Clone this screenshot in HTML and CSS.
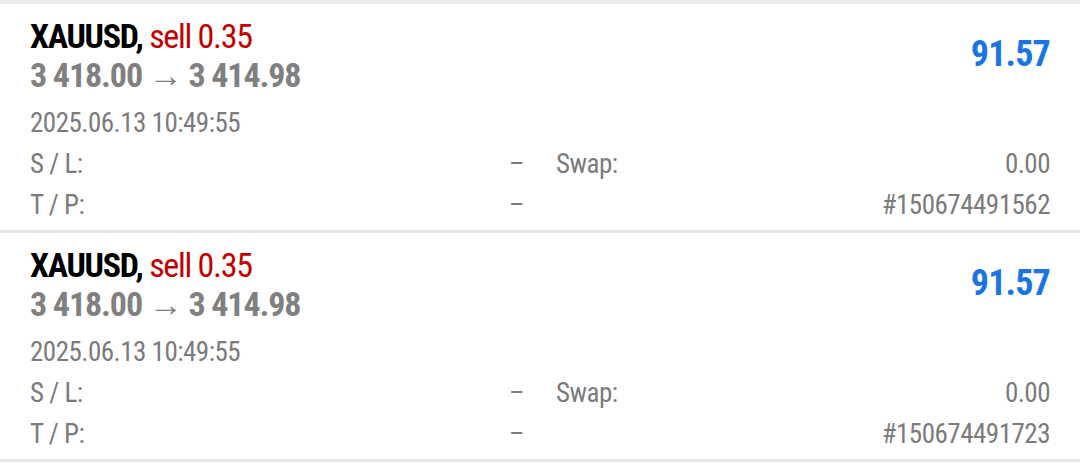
FILE: index.html
```html
<!DOCTYPE html>
<html lang="en">
<head>
<meta charset="UTF-8">
<meta name="viewport" content="width=device-width, initial-scale=1.0">
<title>Positions</title>
<link rel="stylesheet" href="styles.css">
</head>
<body>
<div class="list">
    <div class="order">
        <div class="order-head">
            <div class="order-main">
                <div class="title">XAUUSD, <span class="side">sell 0.35</span></div>
                <div class="prices">3 418.00 <span class="arrow">→</span> 3 414.98</div>
            </div>
            <div class="profit">91.57</div>
        </div>
        <div class="date">2025.06.13 10:49:55</div>
        <div class="details">
            <div class="cell"><span>S / L:</span><span>–</span></div>
            <div class="cell"><span>Swap:</span><span>0.00</span></div>
            <div class="cell"><span>T / P:</span><span>–</span></div>
            <div class="cell"><span></span><span>#150674491562</span></div>
        </div>
    </div>
    <div class="order">
        <div class="order-head">
            <div class="order-main">
                <div class="title">XAUUSD, <span class="side">sell 0.35</span></div>
                <div class="prices">3 418.00 <span class="arrow">→</span> 3 414.98</div>
            </div>
            <div class="profit">91.57</div>
        </div>
        <div class="date">2025.06.13 10:49:55</div>
        <div class="details">
            <div class="cell"><span>S / L:</span><span>–</span></div>
            <div class="cell"><span>Swap:</span><span>0.00</span></div>
            <div class="cell"><span>T / P:</span><span>–</span></div>
            <div class="cell"><span></span><span>#150674491723</span></div>
        </div>
    </div>
</div>
</body>
</html>
```

FILE: styles.css
```css
body {
    margin: 0;
    padding: 0;
    background-color: #fff;
    font-family: "Roboto Condensed", "Roboto", "Liberation Sans", sans-serif;
    font-stretch: condensed;
}
.list {
    border-top: 4px solid #ebebeb;
}
.order {
    padding: 13px 30px 4px 30px;
    border-bottom: 3px solid #e6e6e6;
}
.order-head {
    display: flex;
    justify-content: space-between;
}
.title,
.prices {
    font-size: 34px;
    line-height: 39px;
    font-weight: 700;
}
.title {
    color: #000;
    letter-spacing: -1.3px;
}
.side {
    color: #c20000;
    font-weight: 400;
}
.prices {
    color: #808080;
    letter-spacing: -1.1px;
}
.arrow {
    font-weight: 400;
}
.profit {
    margin-top: 18px;
    font-size: 36px;
    line-height: 39px;
    font-weight: 700;
    color: #1b74e4;
    letter-spacing: -0.8px;
}
.date {
    margin-top: 7px;
    font-size: 27px;
    line-height: 42px;
    color: #7b7b7b;
    letter-spacing: -0.5px;
}
.details {
    display: grid;
    grid-template-columns: 1fr 1fr;
    column-gap: 32px;
    font-size: 27px;
    line-height: 41px;
    color: #7b7b7b;
    letter-spacing: -0.5px;
}
.cell {
    display: flex;
    justify-content: space-between;
}
```
